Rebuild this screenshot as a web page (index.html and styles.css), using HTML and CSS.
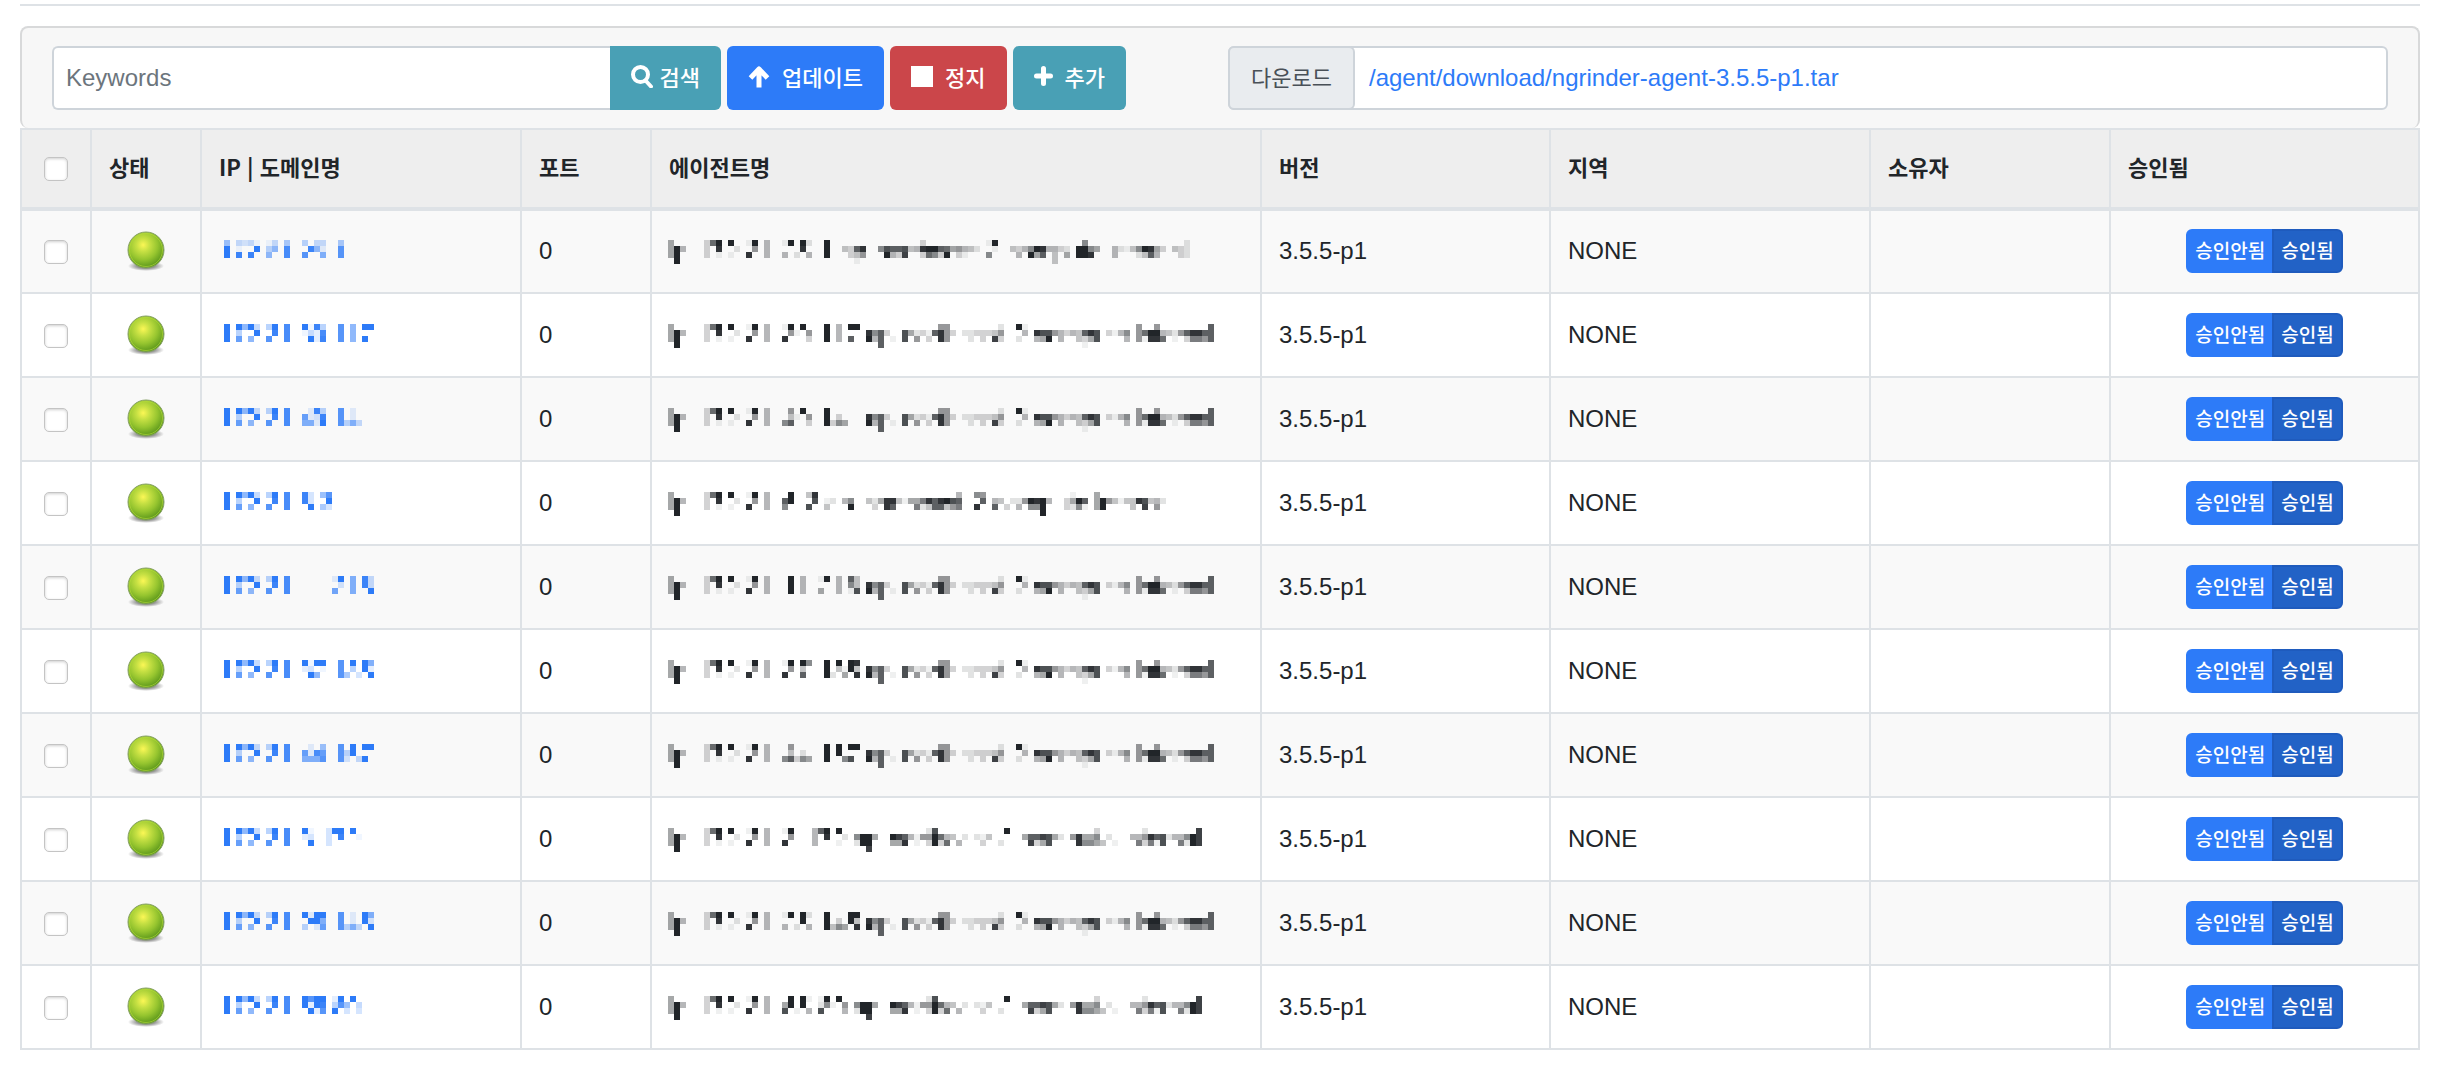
FILE: index.html
```html
<!DOCTYPE html>
<html lang="ko">
<head>
<meta charset="utf-8">
<title>에이전트 관리</title>
<link rel="stylesheet" href="styles.css">
</head>
<body>
<svg class="defs" aria-hidden="true">
  <defs>
    <radialGradient id="led-fill" cx="0.42" cy="0.36" r="0.62">
      <stop offset="0" stop-color="#fbf755"/>
      <stop offset="0.3" stop-color="#c6e043"/>
      <stop offset="0.65" stop-color="#96c52f"/>
      <stop offset="1" stop-color="#5f9a1c"/>
    </radialGradient>
    <radialGradient id="led-shadow">
      <stop offset="0.5" stop-color="#000" stop-opacity="0.4"/>
      <stop offset="1" stop-color="#000" stop-opacity="0"/>
    </radialGradient>
    <symbol id="led" viewBox="0 0 40 42">
      <ellipse cx="20" cy="35" rx="18" ry="5" fill="url(#led-shadow)"/>
      <circle cx="20" cy="19" r="18" fill="url(#led-fill)" stroke="#87a166" stroke-width="1"/>
      <circle cx="20" cy="19" r="16.5" fill="none" stroke="#b5dc3c" stroke-opacity="0.6" stroke-width="1"/>
    </symbol>
  </defs>
</svg>

<main class="page">
  <hr class="rule">
  <form class="toolbar">
    <div class="actions">
      <div class="search">
        <input class="field" type="text" placeholder="Keywords" aria-label="Keywords">
        <button class="btn info joined" type="button">
          <svg class="icon" viewBox="0 0 22 24"><circle cx="9.5" cy="10.5" r="7.5" fill="none" stroke="currentColor" stroke-width="4"/><path d="M14.5 16.5l5.5 6" stroke="currentColor" stroke-width="4" stroke-linecap="round"/></svg>검색
        </button>
      </div>
      <button class="btn primary wide" type="button">
        <svg class="icon" viewBox="0 0 22 24"><path d="M11 5v18.500M2.500 14L11 5l8.500 9" fill="none" stroke="currentColor" stroke-width="5" stroke-linejoin="round"/></svg>업데이트
      </button>
      <button class="btn danger wide" type="button">
        <svg class="icon" viewBox="0 0 22 24"><path d="M0 2h22v21H0z" fill="currentColor"/></svg>정지
      </button>
      <button class="btn info wide" type="button">
        <svg class="icon narrow" viewBox="0 0 19 24"><path d="M9.500 4.500v15M2.500 12h14" stroke="currentColor" stroke-width="5" stroke-linecap="round"/></svg>추가
      </button>
    </div>
    <div class="download">
      <span class="download-label">다운로드</span>
      <a class="download-link" href="#download">/agent/download/ngrinder-agent-3.5.5-p1.tar</a>
    </div>
  </form>

  <table class="agents">
    <colgroup>
      <col class="c-check"><col class="c-state"><col class="c-ip"><col class="c-port"><col><col class="c-version"><col class="c-region"><col class="c-owner"><col class="c-approve">
    </colgroup>
    <thead>
      <tr>
        <th class="center"><input class="tick" type="checkbox" aria-label="전체 선택"></th>
        <th>상태</th><th>IP | 도메인명</th><th>포트</th><th>에이전트명</th><th>버전</th><th>지역</th><th>소유자</th><th>승인됨</th>
      </tr>
    </thead>
    <tbody id="rows"></tbody>
  </table>
</main>
<script src="agents.js"></script>
</body>
</html>
```
FILE: styles.css
```css
* { box-sizing: border-box; }

body {
  margin: 0;
  background: #fff;
  color: #212529;
  font-family: "Liberation Sans", "Noto Sans CJK KR", sans-serif;
  font-size: 24px;
  line-height: 36px;
}

.defs { position: absolute; width: 0; height: 0; }

.page { padding: 4px 24px 18px 20px; }

.rule {
  margin: 0 0 20px;
  border: 0;
  border-top: 2px solid #dee2e6;
}

.toolbar {
  display: grid;
  grid-template-columns: 1fr 1fr;
  gap: 16px;
  padding: 18px 30px;
  background: #f7f7f7;
  border: 2px solid #d8d9da;
  border-bottom: 0;
  border-radius: 8px;
}

.actions {
  display: flex;
  gap: 6px;
  padding-right: 86px;
}

.search { display: flex; flex: 1; min-width: 0; }

.field {
  flex: 1;
  min-width: 0;
  height: 64px;
  padding: 0 12px;
  border: 2px solid #ced4da;
  border-right: 0;
  border-radius: 6px 0 0 6px;
  background: #fff;
  color: #495057;
  font: inherit;
}
.field::placeholder { color: #6c757d; opacity: 1; }

.btn {
  display: flex;
  align-items: center;
  gap: 7px;
  height: 64px;
  padding: 0 21px 4px;
  border: 0;
  border-radius: 6px;
  color: #fff;
  font-family: "Noto Sans CJK KR", sans-serif;
  font-size: 22px;
  font-weight: 500;
  white-space: nowrap;
}
.wide { gap: 12px; }
.joined { border-radius: 0 6px 6px 0; }
.info { background: #49a0b5; }
.primary { background: #2d7bf8; }
.danger { background: #cb464a; }

.icon { width: 22px; height: 24px; flex: none; }
.narrow { width: 19px; }

.download {
  display: flex;
  height: 64px;
  background: #fff;
  border: 2px solid #ced4da;
  border-radius: 6px;
}
.download-label {
  display: flex;
  align-items: center;
  margin: -2px 0 -2px -2px;
  padding: 0 21px 4px;
  background: #e9ecef;
  border: 2px solid #ced4da;
  border-radius: 6px;
  color: #495057;
  font-family: "Noto Sans CJK KR", sans-serif;
  font-size: 22px;
}
.download-link {
  align-self: center;
  padding-left: 14px;
  color: #2d7bf8;
  text-decoration: none;
}

.agents {
  width: 100%;
  table-layout: fixed;
  border-collapse: collapse;
}
.c-check { width: 70px; }
.c-state { width: 110px; }
.c-ip { width: 320px; }
.c-port { width: 130px; }
.c-version { width: 289px; }
.c-region { width: 320px; }
.c-owner { width: 240px; }
.c-approve { width: 309px; }

.agents th,
.agents td {
  padding: 0 17px;
  border: 2px solid #dee2e6;
  text-align: left;
  vertical-align: middle;
}
.agents th {
  height: 80px;
  padding-bottom: 6px;
  background: #eee;
  border-bottom-width: 4px;
  font-family: "Noto Sans CJK KR", sans-serif;
  font-size: 22px;
  font-weight: 700;
}
.agents td { height: 84px; padding-bottom: 1px; }
.agents tbody tr:nth-child(odd) { background: #f9f9f9; }

.agents .center { padding: 1px 0 0; text-align: center; }
.agents .masked { padding: 1px 0 0 22px; color: #2d7bf8; }
.agents .name { padding-left: 16px; color: #212529; }

.tick {
  display: block;
  appearance: none;
  width: 24px;
  height: 24px;
  margin: 0 auto;
  border: 1px solid #c4c4c4;
  border-radius: 5px;
  background: #fff;
  box-shadow: inset 0 1px 3px #d0d0d0;
}

.led { display: block; width: 40px; height: 42px; margin: 0 auto; }

.mosaic { display: block; height: 24px; color: inherit; }
.masked a { display: block; color: inherit; }

.choice { display: flex; justify-content: center; }
.choice button {
  height: 44px;
  padding: 0 7px 3px;
  border: 2px solid #2d7bf8;
  border-radius: 6px 0 0 6px;
  background: #2d7bf8;
  color: #fff;
  font-family: "Noto Sans CJK KR", sans-serif;
  font-size: 19px;
  font-weight: 500;
}
.choice .chosen {
  margin-left: -2px;
  border-color: #1f5bbd;
  border-radius: 0 6px 6px 0;
  background: #2262c6;
}
```
FILE: agents.js
```js
// Addresses and names are masked as mosaics of 6px cells. Every mosaic has
// four lines; a line is a list of "column:levels", a level being a hex
// digit of opacity and a dot an empty cell.
const IP_START = ["0:f.f8f4.5f.d", "0:f.5..f..e.d", "0:f.b.8..c..d", ""];
const NAME_START = ["0:6.....3af.f..1f.5", "0:6f5...3.e..2..7.5", "0:6f....3.1.1..e..5", "1:f"];
const TAIL_A = [
  "45:77 55:2 58:f1 78:7..7........b",
  "33:e8b3..c6231be73.2233347...5.ecc75354bec.3158.7aff5427beebb",
  "33:f5b.1.c.7.3.e7...2.3.d3..2..56f.5..436c....5.71eea.1.3997b",
  "35:b 69:1"
];
const TAIL_B = [
  "43:2c 56:f 71:3 79:2 88:d",
  "31:8ff6 37:fdb5177fa54 49:2 51:214 59:6bbdc62 67:7e668 73:2 77:557ebc2558fd",
  "31:2ff 37:66e.1.3f3a.5 52:3 55:2 60:d36c 68:e8864.1 78:9391c 85:92fd",
  "33:d"
];
const agents = [
  { ip: [["0:7.4341.14.6..5.44..6", "0:f.1..f.58.d...e82..c", "0:f.e.e..8..d..c..9..c", ""]],
    name: [NAME_START, [
      "19:1f.f2 26:f 42:3 53:1f 69:8 86:2",
      "22:e 26:f 29:43be 35:8cbbc45effba67542 54:1 57:4358fe5532 68:ff86 74:52148fe63 84:432",
      "19:5.2.5 26:f 30:347 36:f53d 42:3a83f.31 53:8 58:5.f6b 64:4.6 68:ffe 74:5 78:24b5 85:32",
      "31:1 64:4"]] },
  { ip: [IP_START, ["13:f1e5 19:c.8.ff", "13:142d 19:c.8", "14:f2e 19:c.8.f", ""]],
    name: [NAME_START, ["19:1f.f 26:f.5.ff", "20:71.7 26:f.5", "19:e...3 26:f.5.b", ""], TAIL_A] },
  { ip: [IP_START, ["14:2e5 19:c.2", "13:b23e 19:c.2", "13:992f 19:c594", ""]],
    name: [NAME_START, ["20:7.f 26:f", "20:41.7 26:f.3", "19:8b..3 26:f386", ""], TAIL_A] },
  { ip: [IP_START, ["13:e3.7c", "13:e3..f", "14:f.63", ""]],
    name: [NAME_START, [
      "20:f 23:4e 48:5 51:87 67:1 71:6",
      "19:bf 24:c 26:12.58 33:426ee41669ebefcb 52:b 54:54.227fef5 66:36fb 71:6f74144ec452",
      "19:8 23:c 26:4 30:f 34:3.eb 41:924bb479 51:e 54:b.3.5.88f 66:3281 71:6f 77:4.d.7",
      "62:f"]] },
  { ip: [IP_START, ["18:2f.9.e4", "19:3.9.e4", "18:a..9..f", ""]],
    name: [NAME_START, ["20:f.5..1f.5.b4", "20:f.5 28:5.84", "20:f.5..6..5.1c", ""], TAIL_A] },
  { ip: [IP_START, ["13:f1ff 19:c.f.f9", "13:23.1 19:c.5.f2", "14:f8 19:c6.3.f", ""]],
    name: [NAME_START, ["19:1f.f8 26:f.f.fe", "20:7.4 26:f.41f4", "19:e..b 26:f2.6.e", ""], TAIL_A] },
  { ip: [IP_START, ["14:2.7 19:c.f.ff", "13:b2db 19:c5f", "13:999c 19:c3.4f", ""]],
    name: [NAME_START, ["20:7 26:f.f.ff", "20:4.2 26:f.f", "19:8b386 26:f..8c", ""], TAIL_A] },
  { ip: [IP_START, ["13:f1..3ff.f", "13:23..3.e..1", "14:f..3", ""]],
    name: [NAME_START, ["19:1f 24:5bf.f", "20:7 24:5.e..2", "19:e 24:5...1", ""], TAIL_B] },
  { ip: [IP_START, ["13:f2ff 19:c.2.f9", "14:ff9 19:c.2.f3", "13:5.2b 19:c594.f", ""]],
    name: [NAME_START, ["19:1f.f2 26:f...ff", "22:f 26:f.3.f4", "19:5.2.5 26:f486.e", ""], TAIL_A] },
  { ip: [IP_START, ["13:fcff 18:2f.f", "13:f2fe 18:5c7.4", "14:f2c.f.3.3", ""]],
    name: [NAME_START, ["20:f.f1.1f.f", "19:6f.f 25:281.7", "19:c.1.5.c...5", ""], TAIL_B] }
];

function mosaic(parts, columns) {
  const cells = [];
  for (const part of parts) {
    part.forEach((line, y) => {
      for (const run of line.split(" ").filter(Boolean)) {
        const [start, levels] = run.split(":");
        [...levels].forEach((level, i) => {
          if (level === ".") return;
          const opacity = (parseInt(level, 16) / 15).toFixed(2);
          cells.push(`<rect x="${(Number(start) + i) * 6}" y="${y * 6}" width="6" height="6" fill-opacity="${opacity}"/>`);
        });
      }
    });
  }
  return `<svg class="mosaic" width="${columns * 6}" height="24" fill="currentColor" shape-rendering="crispEdges" aria-hidden="true">${cells.join("")}</svg>`;
}

document.getElementById("rows").innerHTML = agents.map((agent, i) => `
  <tr>
    <td class="center"><input class="tick" type="checkbox" aria-label="에이전트 ${i + 1} 선택"></td>
    <td class="center"><svg class="led" role="img" aria-label="정상"><use href="#led"/></svg></td>
    <td class="masked"><a href="#agent-${i + 1}" aria-label="에이전트 ${i + 1}">${mosaic(agent.ip, 25)}</a></td>
    <td>0</td>
    <td class="masked name">${mosaic(agent.name, 91)}</td>
    <td>3.5.5-p1</td>
    <td>NONE</td>
    <td></td>
    <td><div class="choice"><button type="button">승인안됨</button><button class="chosen" type="button">승인됨</button></div></td>
  </tr>`).join("");
```
